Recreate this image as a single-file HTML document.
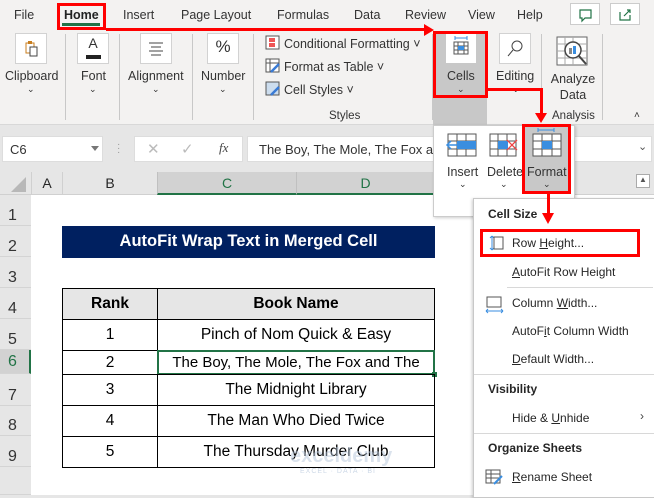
<!DOCTYPE html>
<html><head><meta charset="utf-8"><style>
*{margin:0;padding:0;box-sizing:border-box}
body{width:654px;height:495px;overflow:hidden;background:#e6e6e6;font-family:"Liberation Sans",sans-serif;position:relative;color:#262626}
.a{position:absolute}
.t{font-size:12.5px;color:#333}
.c{text-align:center}
.ib{position:absolute;background:#fff;border:1px solid #d2d2d2}
.sep{position:absolute;width:1px;background:#c8c8c8}
.rh{position:absolute;left:0;width:31px;font-size:16px;color:#333;padding-left:8px;border-bottom:1px solid #d4d4d4;background:#e6e6e6}
.cell{position:absolute;border:1px solid #000;text-align:center;font-size:15.5px;color:#000;display:flex;align-items:center;justify-content:center}
.mi{position:absolute;left:512px;font-size:12px;color:#262626}
.mh{position:absolute;left:488px;font-size:12px;font-weight:bold;color:#262626}
.r{position:absolute;background:#f00}
</style></head><body>
<div class="a" style="left:0;top:0;width:654px;height:31px;background:#f3f2f1"></div>
<div class="a t" style="left:14px;top:8px">File</div>
<div class="a t" style="left:64px;top:8px;font-weight:bold;color:#222">Home</div>
<div class="a" style="left:62px;top:23px;width:38px;height:3px;background:#217346"></div>
<div class="a t" style="left:123px;top:8px">Insert</div>
<div class="a t" style="left:181px;top:8px">Page Layout</div>
<div class="a t" style="left:277px;top:8px">Formulas</div>
<div class="a t" style="left:354px;top:8px">Data</div>
<div class="a t" style="left:405px;top:8px">Review</div>
<div class="a t" style="left:468px;top:8px">View</div>
<div class="a t" style="left:517px;top:8px">Help</div>
<div class="ib" style="left:570px;top:3px;width:30px;height:22px;border-color:#ccc"><svg width="28" height="20"><path d="M9 6h11v8h-6l-3 3v-3h-2z" fill="none" stroke="#217346" stroke-width="1.2"/></svg></div>
<div class="ib" style="left:610px;top:3px;width:30px;height:22px;border-color:#ccc"><svg width="28" height="20"><path d="M9 8v8h10v-5M13 12l6-6M16 6h3v3" fill="none" stroke="#217346" stroke-width="1.2"/></svg></div>
<div class="a" style="left:0;top:31px;width:654px;height:94px;background:#f3f2f1;border-bottom:1px solid #d8d8d8"></div>
<div class="ib" style="left:15px;top:33px;width:32px;height:31px"><svg width="30" height="29"><rect x="10" y="9" width="8" height="10" fill="none" stroke="#c87e1e"/><rect x="14" y="13" width="7" height="9" fill="#fff" stroke="#444"/><rect x="12" y="7" width="4" height="3" fill="#c87e1e"/></svg></div>
<div class="a t" style="left:5px;top:69px">Clipboard</div><div class="a t" style="left:27px;top:84px;font-size:9px">⌄</div>
<div class="sep" style="left:65px;top:34px;height:86px"></div>
<div class="ib" style="left:77px;top:33px;width:32px;height:31px"><div style="text-align:center;font-size:14px;color:#333;margin-top:1px">A</div><div style="position:absolute;left:8px;top:21px;width:15px;height:4px;background:#222"></div></div>
<div class="a t" style="left:81px;top:69px">Font</div><div class="a t" style="left:89px;top:84px;font-size:9px">⌄</div>
<div class="sep" style="left:119px;top:34px;height:86px"></div>
<div class="ib" style="left:140px;top:33px;width:32px;height:31px"><svg width="30" height="29"><path d="M8 9h14M10 13h10M8 17h14M10 21h10" stroke="#444"/></svg></div>
<div class="a t" style="left:128px;top:69px">Alignment</div><div class="a t" style="left:152px;top:84px;font-size:9px">⌄</div>
<div class="sep" style="left:192px;top:34px;height:86px"></div>
<div class="ib" style="left:207px;top:33px;width:32px;height:31px"><div style="text-align:center;font-size:17px;color:#333;margin-top:3px">%</div></div>
<div class="a t" style="left:201px;top:69px">Number</div><div class="a t" style="left:219px;top:84px;font-size:9px">⌄</div>
<div class="sep" style="left:253px;top:34px;height:86px"></div>
<svg class="a" style="left:265px;top:35px" width="16" height="16"><rect x="1" y="1" width="13" height="13" fill="#fff" stroke="#555"/><rect x="4" y="3" width="6" height="4" fill="#e55"/><rect x="4" y="8" width="6" height="4" fill="#e55"/></svg>
<div class="a t" style="left:284px;top:37px">Conditional Formatting ˅</div>
<svg class="a" style="left:265px;top:58px" width="16" height="16"><rect x="1" y="1" width="13" height="13" fill="#fff" stroke="#555"/><path d="M1 5h13M5 1v13" stroke="#555"/><path d="M6 14l8-8" stroke="#3a7bd5" stroke-width="2.5"/></svg>
<div class="a t" style="left:284px;top:60px">Format as Table ˅</div>
<svg class="a" style="left:265px;top:81px" width="16" height="16"><rect x="1" y="1" width="13" height="13" fill="#cde" stroke="#555"/><path d="M6 14l8-8" stroke="#3a7bd5" stroke-width="2.5"/></svg>
<div class="a t" style="left:284px;top:83px">Cell Styles ˅</div>
<div class="a t" style="left:329px;top:110px;font-size:11.5px">Styles</div>
<div class="sep" style="left:432px;top:34px;height:86px"></div>
<div class="a" style="left:433px;top:31px;width:54px;height:94px;background:#c8c8c8"></div>
<div class="ib" style="left:446px;top:33px;width:30px;height:30px;border:none"><svg width="30" height="30"><rect x="8" y="9" width="14" height="12" fill="#fff" stroke="#555"/><path d="M8 13h14M8 17h14M12 9v12M18 9v12" stroke="#555"/><rect x="12" y="13" width="6" height="4" fill="#3a8ee0"/><path d="M9 5h12M9 3v4M21 3v4" stroke="#3a8ee0"/></svg></div>
<div class="a t" style="left:447px;top:69px">Cells</div><div class="a t" style="left:457px;top:84px;font-size:9px">⌄</div>
<div class="ib" style="left:499px;top:33px;width:32px;height:31px"><svg width="30" height="29"><circle cx="17" cy="12" r="5" fill="none" stroke="#444"/><path d="M13 16l-5 6" stroke="#444"/></svg></div>
<div class="a t" style="left:496px;top:69px">Editing</div><div class="a t" style="left:512px;top:84px;font-size:9px">⌄</div>
<div class="sep" style="left:541px;top:34px;height:86px"></div>
<svg class="a" style="left:556px;top:36px" width="34" height="32"><rect x="1" y="1" width="30" height="28" fill="#fff" stroke="#666"/><path d="M1 8h30M1 15h30M1 22h30M9 1v28M17 1v28" stroke="#aaa"/><circle cx="17" cy="14" r="8" fill="#fff" stroke="#444" stroke-width="1.5"/><rect x="13" y="12" width="3" height="6" fill="#888"/><rect x="17" y="10" width="3" height="8" fill="#3a8ee0"/><path d="M23 20l7 8" stroke="#444" stroke-width="2"/></svg>
<div class="a t c" style="left:548px;top:71px;width:50px;line-height:16px">Analyze<br>Data</div>
<div class="a t" style="left:552px;top:110px;font-size:11.5px">Analysis</div>
<div class="sep" style="left:602px;top:34px;height:86px"></div>
<div class="a t" style="left:634px;top:110px;font-size:10px">˄</div>
<div class="ib" style="left:2px;top:136px;width:101px;height:26px;border-color:#ddd"><span style="position:absolute;left:7px;top:5px;font-size:13px;color:#333">C6</span><span style="position:absolute;left:88px;top:9px;border:4px solid transparent;border-top:5px solid #777"></span></div>
<div class="a" style="left:117px;top:143px;color:#999;font-size:10px;line-height:4px">·<br>·<br>·</div>
<div class="ib" style="left:134px;top:136px;width:109px;height:26px;border-color:#ddd"><span style="position:absolute;left:12px;top:3px;color:#bbb;font-size:15px">✕</span><span style="position:absolute;left:46px;top:3px;color:#bbb;font-size:15px">✓</span><span style="position:absolute;left:84px;top:3px;color:#444;font-size:13px;font-style:italic;font-family:'Liberation Serif',serif">fx</span></div>
<div class="ib" style="left:247px;top:136px;width:405px;height:26px;border-color:#ddd"><span style="position:absolute;left:11px;top:5px;font-size:13px;color:#333">The Boy, The Mole, The Fox and The</span><span style="position:absolute;left:390px;top:3px;color:#555;font-size:11px">⌄</span></div>
<div class="a" style="left:0;top:172px;width:654px;height:323px;background:#fff"></div>
<div class="a" style="left:0;top:172px;width:654px;height:23px;background:#e6e6e6;border-bottom:1px solid #d0d0d0"></div>
<div class="a" style="left:0;top:172px;width:31px;height:23px"><div style="position:absolute;left:11px;top:5px;border-left:15px solid transparent;border-bottom:15px solid #b8b8b8"></div></div>
<div class="a" style="left:31px;top:172px;width:31px;height:23px;border-left:1px solid #d0d0d0;font-size:14px;text-align:center;padding-top:3px">A</div>
<div class="a" style="left:62px;top:172px;width:95px;height:23px;border-left:1px solid #d0d0d0;font-size:14px;text-align:center;padding-top:3px">B</div>
<div class="a" style="left:157px;top:172px;width:139px;height:23px;background:#d2d2d2;border-bottom:2px solid #217346;border-left:1px solid #c0c0c0;font-size:14px;text-align:center;padding-top:3px;color:#217346">C</div>
<div class="a" style="left:296px;top:172px;width:138px;height:23px;background:#d2d2d2;border-bottom:2px solid #217346;border-left:1px solid #c0c0c0;font-size:14px;text-align:center;padding-top:3px;color:#217346">D</div>
<div class="a" style="left:30px;top:195px;width:1px;height:300px;background:#c8c8c8"></div>
<div class="rh" style="top:195px;height:31px;padding-top:12px">1</div>
<div class="rh" style="top:226px;height:31px;padding-top:12px">2</div>
<div class="rh" style="top:257px;height:31px;padding-top:12px">3</div>
<div class="rh" style="top:288px;height:31px;padding-top:12px">4</div>
<div class="rh" style="top:319px;height:31px;padding-top:12px">5</div>
<div class="rh" style="top:350px;height:24px;padding-top:3px;background:#d2d2d2;color:#217346;border-right:2px solid #217346">6</div>
<div class="rh" style="top:374px;height:32px;padding-top:13px">7</div>
<div class="rh" style="top:406px;height:30px;padding-top:11px">8</div>
<div class="rh" style="top:436px;height:31px;padding-top:12px">9</div>
<div class="rh" style="top:467px;height:28px"></div>
<div class="a" style="left:62px;top:226px;width:373px;height:32px;background:#002060;color:#fff;font-weight:bold;font-size:16.5px;text-align:center;padding-top:6px">AutoFit Wrap Text in Merged Cell</div>
<div class="cell" style="left:62px;top:288px;width:96px;height:32px;background:#e6e6e6;font-weight:bold">Rank</div>
<div class="cell" style="left:157px;top:288px;width:278px;height:32px;background:#e6e6e6;font-weight:bold">Book Name</div>
<div class="cell" style="left:62px;top:319px;width:96px;height:32px">1</div>
<div class="cell" style="left:157px;top:319px;width:278px;height:32px">Pinch of Nom Quick &amp; Easy</div>
<div class="cell" style="left:62px;top:350px;width:96px;height:25px">2</div>
<div class="cell" style="left:157px;top:350px;width:278px;height:25px;border:2px solid #217346;white-space:nowrap;font-size:15px">The Boy, The Mole, The Fox and The</div>
<div class="a" style="left:432px;top:372px;width:5px;height:5px;background:#217346"></div>
<div class="cell" style="left:62px;top:374px;width:96px;height:32px">3</div>
<div class="cell" style="left:157px;top:374px;width:278px;height:32px">The Midnight Library</div>
<div class="cell" style="left:62px;top:405px;width:96px;height:32px">4</div>
<div class="cell" style="left:157px;top:405px;width:278px;height:32px">The Man Who Died Twice</div>
<div class="cell" style="left:62px;top:436px;width:96px;height:32px">5</div>
<div class="cell" style="left:157px;top:436px;width:278px;height:32px">The Thursday Murder Club</div>
<div class="a" style="left:290px;top:445px;color:#b9c9dd;font-size:20px;font-weight:bold;opacity:.5">exceldemy</div>
<div class="a" style="left:300px;top:468px;color:#b9c9dd;font-size:7px;opacity:.7;letter-spacing:1px">EXCEL · DATA · BI</div>
<div class="a" style="left:636px;top:174px;width:14px;height:14px;border:1px solid #aaa;background:#fff;font-size:8px;text-align:center;color:#555">▲</div>
<div class="a" style="left:433px;top:125px;width:142px;height:92px;background:#fff;border:1px solid #ccc;box-shadow:1px 1px 3px rgba(0,0,0,.2)"></div>
<svg class="a" style="left:445px;top:132px" width="35" height="26"><rect x="3" y="2" width="28" height="22" fill="#fff" stroke="#555"/><path d="M3 9h28M3 17h28M12 2v22M21 2v22" stroke="#555"/><rect x="12" y="9" width="19" height="8" fill="#3a8ee0"/><path d="M20 13H2M6 9l-4 4 4 4" fill="none" stroke="#3a8ee0" stroke-width="1.5"/></svg>
<div class="a t" style="left:447px;top:165px">Insert</div><div class="a t" style="left:459px;top:179px;font-size:9px">⌄</div>
<svg class="a" style="left:488px;top:132px" width="32" height="26"><rect x="2" y="2" width="26" height="22" fill="#fff" stroke="#555"/><path d="M2 9h26M2 17h26M10 2v22M19 2v22" stroke="#555"/><rect x="10" y="9" width="10" height="8" fill="#3a8ee0"/><path d="M19 8l10 10M29 8l-10 10" stroke="#e44" stroke-width="1.3"/></svg>
<div class="a t" style="left:487px;top:165px">Delete</div><div class="a t" style="left:500px;top:179px;font-size:9px">⌄</div>
<div class="a" style="left:522px;top:124px;width:48px;height:69px;background:#c8c8c8"></div>
<svg class="a" style="left:530px;top:126px" width="34" height="32"><path d="M8 4h16M8 2v4M24 2v4" stroke="#3a8ee0"/><rect x="3" y="8" width="28" height="22" fill="#fff" stroke="#555"/><path d="M3 15h28M3 23h28M12 8v22M22 8v22" stroke="#555"/><rect x="12" y="15" width="10" height="8" fill="#3a8ee0"/></svg>
<div class="a t" style="left:527px;top:165px">Format</div><div class="a t" style="left:543px;top:179px;font-size:9px">⌄</div>
<div class="a" style="left:473px;top:198px;width:182px;height:300px;background:#fff;border:1px solid #c8c8c8;box-shadow:-1px 1px 3px rgba(0,0,0,.2)"></div>
<div class="mh" style="top:207px">Cell Size</div>
<svg class="a" style="left:485px;top:234px" width="20" height="18"><path d="M7 2v14M7 2l-2 2M7 2l2 2M7 16l-2-2M7 16l2-2" stroke="#3a8ee0" fill="none"/><rect x="9" y="3" width="9" height="12" fill="none" stroke="#555"/></svg>
<div class="mi" style="top:236px"><span>Row <u>H</u>eight...</span></div>
<div class="mi" style="top:265px"><u>A</u>utoFit Row Height</div>
<div class="a" style="left:507px;top:287px;width:146px;height:1px;background:#d8d8d8"></div>
<svg class="a" style="left:485px;top:296px" width="20" height="18"><rect x="2" y="1" width="14" height="10" fill="none" stroke="#555"/><path d="M1 15h17M1 15l2-2M1 15l2 2M18 15l-2-2M18 15l-2 2" stroke="#3a8ee0" fill="none"/></svg>
<div class="mi" style="top:296px">Column <u>W</u>idth...</div>
<div class="mi" style="top:324px">AutoF<u>i</u>t Column Width</div>
<div class="mi" style="top:352px"><u>D</u>efault Width...</div>
<div class="a" style="left:474px;top:374px;width:180px;height:1px;background:#d8d8d8"></div>
<div class="mh" style="top:382px">Visibility</div>
<div class="mi" style="top:411px">Hide &amp; <u>U</u>nhide</div>
<div class="a" style="left:640px;top:409px;font-size:12px;color:#444">›</div>
<div class="a" style="left:474px;top:433px;width:180px;height:1px;background:#d8d8d8"></div>
<div class="mh" style="top:441px">Organize Sheets</div>
<svg class="a" style="left:485px;top:468px" width="20" height="18"><rect x="1" y="2" width="14" height="13" fill="none" stroke="#555"/><path d="M1 6h14M1 10h14M6 2v13" stroke="#555"/><path d="M9 16l8-8" stroke="#3a8ee0" stroke-width="2"/></svg>
<div class="mi" style="top:470px"><u>R</u>ename Sheet</div>
<div class="a" style="left:57px;top:3px;width:49px;height:27px;border:3px solid #f00"></div>
<div class="r" style="left:106px;top:28px;width:320px;height:3px"></div>
<div class="a" style="left:424px;top:24px;border-top:6px solid transparent;border-bottom:6px solid transparent;border-left:10px solid #f00"></div>
<div class="a" style="left:433px;top:31px;width:55px;height:67px;border:3px solid #f00"></div>
<div class="r" style="left:487px;top:88px;width:56px;height:3px"></div>
<div class="r" style="left:540px;top:88px;width:3px;height:28px"></div>
<div class="a" style="left:535px;top:113px;border-left:6px solid transparent;border-right:6px solid transparent;border-top:10px solid #f00"></div>
<div class="a" style="left:522px;top:124px;width:49px;height:70px;border:3px solid #f00"></div>
<div class="r" style="left:547px;top:193px;width:3px;height:22px"></div>
<div class="a" style="left:542px;top:213px;border-left:6px solid transparent;border-right:6px solid transparent;border-top:11px solid #f00"></div>
<div class="a" style="left:480px;top:229px;width:160px;height:28px;border:3px solid #f00"></div>
</body></html>
